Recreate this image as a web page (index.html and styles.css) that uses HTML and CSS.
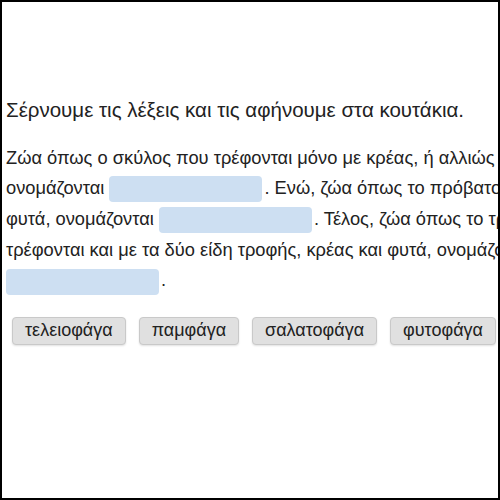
FILE: index.html
```html
<!DOCTYPE html>
<html lang="el">
<head>
  <meta charset="UTF-8">
  <title>Τροφές ζώων</title>
  <link rel="stylesheet" href="styles.css">
</head>
<body>
  <div class="frame">
    <div class="exercise">
      <h1 class="prompt">Σέρνουμε τις λέξεις και τις αφήνουμε στα κουτάκια.</h1>

      <p class="passage">
        Ζώα όπως ο σκύλος που τρέφονται μόνο με κρέας, ή αλλιώς<br>
        ονομάζονται <span class="drop"></span>. Ενώ, ζώα όπως το πρόβατο που τρέφονται μόνο με<br>
        φυτά, ονομάζονται <span class="drop"></span>. Τέλος, ζώα όπως το τρωκτικό ή ο άνθρωπος που<br>
        τρέφονται και με τα δύο είδη τροφής, κρέας και φυτά, ονομάζονται<br>
        <span class="drop"></span>.
      </p>

      <div class="words">
        <button class="word">τελειοφάγα</button>
        <button class="word">παμφάγα</button>
        <button class="word">σαλατοφάγα</button>
        <button class="word">φυτοφάγα</button>
      </div>
    </div>
  </div>
</body>
</html>
```

FILE: styles.css
```css
* {
  margin: 0;
  padding: 0;
  box-sizing: border-box;
}

body {
  font-family: 'Liberation Sans', Arial, sans-serif;
  color: #222;
  background: #fff;
}

.frame {
  width: 500px;
  height: 500px;
  border: 2px solid #000;
  overflow: hidden;
  padding: 95px 0 0 4px;
}

/* wider than the frame: long lines run past the right edge */
.exercise {
  width: 900px;
}

.prompt {
  font-size: 20.5px;
  font-weight: normal;
  line-height: 26px;
  margin-bottom: 20px;
}

.passage {
  font-size: 18.3px;
  line-height: 30px;
}

.drop {
  display: inline-block;
  width: 153px;
  height: 26px;
  margin: 2px 2px 2px 0;
  vertical-align: middle;
  background: #cddff2;
  border-radius: 4px;
}

.words {
  display: flex;
  gap: 13px;
  margin: 20px 0 0 6px;
}

.word {
  font-family: inherit;
  font-size: 18px;
  color: #222;
  height: 28px;
  padding: 0 12px;
  background: #e0e0e0;
  border: 1px solid #c9c9c9;
  border-radius: 4px;
  box-shadow: 0 1px 2px rgba(0, 0, 0, 0.12);
}
```
